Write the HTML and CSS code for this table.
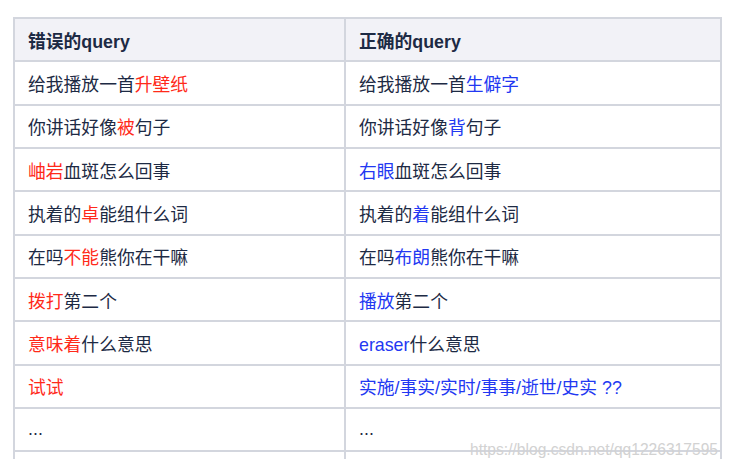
FILE: index.html
```html
<!DOCTYPE html>
<html lang="zh">
<head>
<meta charset="utf-8">
<link rel="stylesheet" href="styles.css">
</head>
<body>
<div class="page">
  <div class="clip">
    <table class="qt">
      <thead>
        <tr><th class="c1">错误的query</th><th class="c2">正确的query</th></tr>
      </thead>
      <tbody>
        <tr><td>给我播放一首<span class="r">升壁纸</span></td><td>给我播放一首<span class="b">生僻字</span></td></tr>
        <tr><td>你讲话好像<span class="r">被</span>句子</td><td>你讲话好像<span class="b">背</span>句子</td></tr>
        <tr><td><span class="r">岫岩</span>血斑怎么回事</td><td><span class="b">右眼</span>血斑怎么回事</td></tr>
        <tr><td>执着的<span class="r">卓</span>能组什么词</td><td>执着的<span class="b">着</span>能组什么词</td></tr>
        <tr><td>在吗<span class="r">不能</span>熊你在干嘛</td><td>在吗<span class="b">布朗</span>熊你在干嘛</td></tr>
        <tr><td><span class="r">拨打</span>第二个</td><td><span class="b">播放</span>第二个</td></tr>
        <tr><td><span class="r">意味着</span>什么意思</td><td><span class="b">eraser</span>什么意思</td></tr>
        <tr><td><span class="r">试试</span></td><td><span class="b">实施/事实/实时/事事/逝世/史实 ??</span></td></tr>
        <tr><td>...</td><td>...</td></tr>
        <tr><td>&nbsp;</td><td>&nbsp;</td></tr>
      </tbody>
    </table>
  </div>
  <div class="wm">https://blog.csdn.net/qq1226317595</div>
</div>
</body>
</html>
```
FILE: styles.css
```css
html, body {
  margin: 0;
  padding: 0;
  background: #ffffff;
}
.page {
  position: relative;
  width: 730px;
  height: 471px;
  overflow: hidden;
  padding: 17px 0 0 12px;
  box-sizing: border-box;
}
.clip {
  width: 710px;
  height: 442px;
  overflow: hidden;
}
.qt {
  border-collapse: collapse;
  table-layout: fixed;
  width: 707px;
  margin-left: 1px;
  font-family: "Liberation Sans", "Noto Sans CJK SC", sans-serif;
  font-size: 17.8px;
  color: #1d2a44;
}
.qt th, .qt td {
  border: 2px solid #d3d6de;
  height: 43.33px;
  padding: 0 0 0 13px;
  box-sizing: border-box;
  text-align: left;
  vertical-align: middle;
  white-space: nowrap;
}
.qt th {
  background: #f2f2f7;
  font-weight: bold;
}
.c1 { width: 331px; }
.c2 { width: 376px; }
.r { color: #ff2a1a; }
.b { color: #2238f2; }
.wm {
  position: absolute;
  right: 12px;
  top: 441px;
  font-family: "Liberation Sans", sans-serif;
  font-size: 15.6px;
  color: #d2d2d2;
}
```
